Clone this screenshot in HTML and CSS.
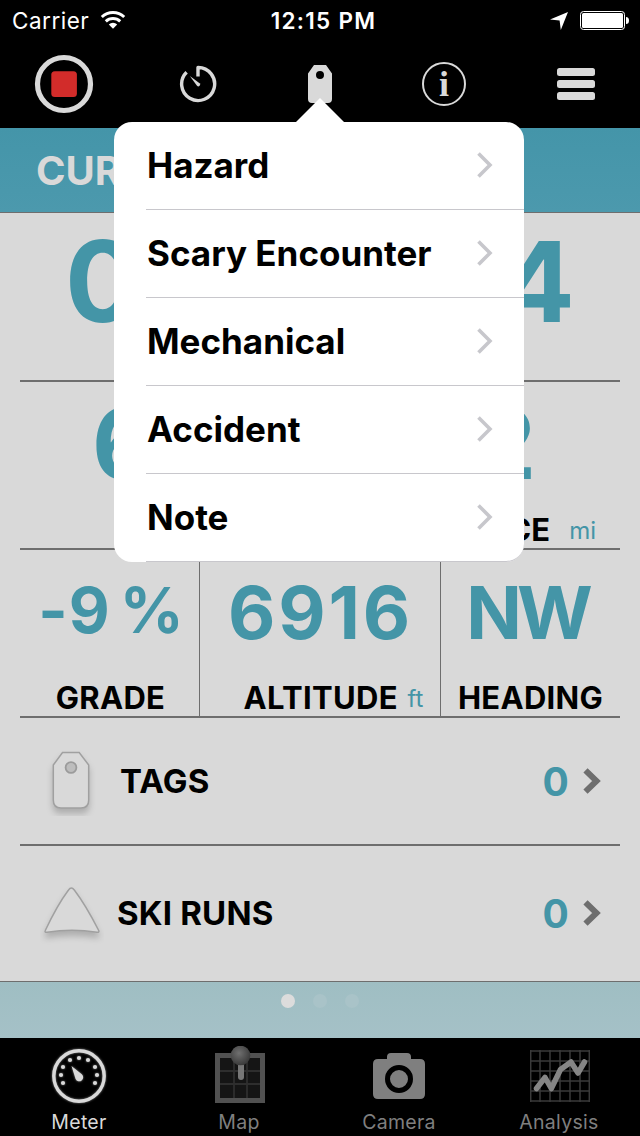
FILE: index.html
```
<!DOCTYPE html>
<html lang="en">
<head>
  <meta charset="UTF-8">
  <meta name="viewport" content="width=device-width, initial-scale=1.0">
  <title>Ski Meter</title>
  <link rel="stylesheet" href="styles.css">
</head>
<body>
  <div class="statusBar">
    <div class="statusLeft">
      <span class="carrier">Carrier</span>
      <svg width="26" height="20" viewBox="0 0 26 20">
        <path d="M1.8 7 A16.5 16.5 0 0 1 24.2 7" fill="none" stroke="#fff" stroke-width="3"/>
        <path d="M5.8 11.3 A10.6 10.6 0 0 1 20.2 11.3" fill="none" stroke="#fff" stroke-width="3"/>
        <path d="M8.8 14.4 A6 6 0 0 1 17.2 14.4 L13 18.8 Z" fill="#fff"/>
      </svg>
    </div>
    <div class="clock">12:15 PM</div>
    <div class="statusRight">
      <svg width="18" height="19" viewBox="0 0 18 19"><path d="M18 1 L10.8 19 L9.6 9.6 L0 8.6 Z" fill="#fff"/></svg>
      <svg width="50" height="20" viewBox="0 0 50 20">
        <rect x="0.5" y="0.5" width="44" height="18" rx="3" fill="none" stroke="#fff"/>
        <rect x="2" y="2" width="41" height="15" rx="1.5" fill="#fff"/>
        <path d="M46 6 Q49 6 49 9.5 Q49 13 46 13 Z" fill="#fff"/>
      </svg>
    </div>
  </div>

  <div class="toolbar">
    <svg width="60" height="60" viewBox="0 0 60 60">
      <circle cx="30" cy="30" r="26.5" fill="none" stroke="#d9d9d9" stroke-width="5.2"/>
      <rect x="17.3" y="17.3" width="25.6" height="25.6" rx="3.5" fill="#d22c2a"/>
    </svg>
    <svg width="40" height="40" viewBox="0 0 40 40">
      <path d="M20 12.5 V3.5 A16.5 16.5 0 1 1 8.6 8.2" fill="none" stroke="#d9d9d9" stroke-width="3.4" stroke-linejoin="round"/>
      <path d="M11.8 12 L21.6 19.2 A1.8 1.8 0 0 1 19 21.8 Z" fill="#d9d9d9"/>
    </svg>
    <svg width="24" height="38" viewBox="0 0 24 38">
      <path fill-rule="evenodd" d="M6 0 H18 L24 8.5 V34 Q24 38 20 38 H4 Q0 38 0 34 V8.5 Z M12 6 A4 4 0 1 0 12 14 A4 4 0 1 0 12 6 Z" fill="#d9d9d9"/>
    </svg>
    <div class="infoIcon">i</div>
    <svg width="38" height="32" viewBox="0 0 38 32">
      <rect width="38" height="8" rx="2.5" fill="#d9d9d9"/>
      <rect y="12" width="38" height="8" rx="2.5" fill="#d9d9d9"/>
      <rect y="24" width="38" height="8" rx="2.5" fill="#d9d9d9"/>
    </svg>
  </div>

  <div class="header">CUR</div>

  <div class="panel">
    <div class="metricRow topRow">
      <div class="cell toLeft"><div class="value">0</div></div>
      <div class="cell toRight"><div class="value">4</div></div>
    </div>
    <div class="metricRow midRow">
      <div class="cell toLeft"><div class="value">6</div></div>
      <div class="cell toRight">
        <div class="value">2</div>
        <div class="label">CE <span class="unit">mi</span></div>
      </div>
    </div>
    <div class="metricRow smallRow">
      <div class="cell">
        <div class="value grade">-9 %</div>
        <div class="label gradeLabel">GRADE</div>
      </div>
      <div class="cell">
        <div class="value altitude">6916</div>
        <div class="label altLabel">ALTITUDE <span class="unit">ft</span></div>
      </div>
      <div class="cell">
        <div class="value heading">NW</div>
        <div class="label">HEADING</div>
      </div>
    </div>
    <div class="listRow tagsRow">
      <svg class="listIcon" width="64" height="70" viewBox="0 0 64 70">
        <path class="lifted" d="M22.5 6.5 H39.2 L48.7 19 V54 Q48.7 62 41 62 H21 Q13.3 62 13.3 54 V19 Z"/>
        <circle cx="31" cy="21.5" r="5.4" fill="#bdbdbd" stroke="#9b9b9b" stroke-width="1.8"/>
      </svg>
      <span class="listName">TAGS</span>
      <span class="count">0</span>
      <svg width="20" height="28" viewBox="0 0 20 28"><path d="M2.5 3.3 L13.5 14 L2.5 24.7" fill="none" stroke="#6e6e6e" stroke-width="6"/></svg>
    </div>
    <div class="listRow runsRow">
      <svg class="listIcon" width="64" height="70" viewBox="0 0 64 70">
        <path class="lifted" d="M28.5 12 Q31.3 8 34.3 12 Q46 27.5 58.7 52.5 Q59.5 54.5 57 54.2 Q32 50.5 7 54.2 Q4.3 54.5 5.3 52.5 Q17 27.5 28.5 12 Z"/>
      </svg>
      <span class="listName">SKI RUNS</span>
      <span class="count">0</span>
      <svg width="20" height="28" viewBox="0 0 20 28"><path d="M2.5 3.3 L13.5 14 L2.5 24.7" fill="none" stroke="#6e6e6e" stroke-width="6"/></svg>
    </div>
  </div>

  <div class="pager">
    <span class="dot active"></span>
    <span class="dot"></span>
    <span class="dot"></span>
  </div>

  <div class="tabBar">
    <div class="tab selected">
      <svg class="glow" width="60" height="60" viewBox="0 0 60 60">
        <circle cx="29" cy="30" r="25.2" fill="none" stroke="#d9d9d9" stroke-width="3.4"/>
        <g fill="#d9d9d9">
          <circle cx="29" cy="12" r="2.1"/>
          <circle cx="20" cy="14" r="2.1"/>
          <circle cx="38" cy="14" r="2.1"/>
          <circle cx="13" cy="21" r="2.1"/>
          <circle cx="45" cy="21" r="2.1"/>
          <circle cx="11" cy="29" r="2.1"/>
          <circle cx="47" cy="29" r="2.1"/>
          <circle cx="13" cy="37" r="2.1"/>
          <circle cx="45" cy="37" r="2.1"/>
          <path d="M21.5 20 L31.8 28.2 A4 4 0 1 1 25.6 33 Z"/>
        </g>
      </svg>
      <span>Meter</span>
    </div>
    <div class="tab">
      <svg width="60" height="60" viewBox="0 0 60 60">
        <defs>
          <radialGradient id="ball" cx="0.42" cy="0.38" r="0.6">
            <stop offset="0" stop-color="#707070"/>
            <stop offset="1" stop-color="#3c3c3c"/>
          </radialGradient>
        </defs>
        <rect x="7.5" y="9.5" width="45" height="45" fill="#151515" stroke="#515151" stroke-width="5"/>
        <path d="M24 12 V52 M37 12 V52 M10 25 H50 M10 38 H50" stroke="#2e2e2e" stroke-width="1.8"/>
        <rect x="28" y="16" width="6" height="18" rx="3" fill="#777"/>
        <circle cx="30.5" cy="9.5" r="9.8" fill="url(#ball)"/>
      </svg>
      <span>Map</span>
    </div>
    <div class="tab">
      <svg width="60" height="60" viewBox="0 0 60 60">
        <path d="M3 18 Q3 13 8 13 H17 V11 Q17 7 21 7 H37 Q41 7 41 11 V13 H50 Q55 13 55 18 V48 Q55 53 50 53 H8 Q3 53 3 48 Z" fill="#7f7f7f"/>
        <circle cx="29" cy="33" r="11.5" fill="none" stroke="#000" stroke-width="5"/>
      </svg>
      <span>Camera</span>
    </div>
    <div class="tab">
      <svg width="60" height="60" viewBox="0 0 60 60">
        <path d="M0.7 4 V56 M10 4 V56 M20 4 V56 M30 4 V56 M40 4 V56 M50 4 V56 M59.3 4 V56 M0 5 H60 M0 15 H60 M0 25 H60 M0 35 H60 M0 45 H60 M0 55 H60" stroke="#3a3a3a" stroke-width="1.5"/>
        <path class="chartLine" d="M6.5 42.5 L15 31.5 L21.3 42.5 L30.5 23.5 L41 16 L48 27 L54.5 16"/>
      </svg>
      <span>Analysis</span>
    </div>
  </div>

  <div class="popover">
    <div class="option"><span>Hazard</span><svg width="16" height="26" viewBox="0 0 16 26"><path d="M1.5 1.4 L13 13 L1.5 24.6"/></svg></div>
    <div class="option"><span>Scary Encounter</span><svg width="16" height="26" viewBox="0 0 16 26"><path d="M1.5 1.4 L13 13 L1.5 24.6"/></svg></div>
    <div class="option"><span>Mechanical</span><svg width="16" height="26" viewBox="0 0 16 26"><path d="M1.5 1.4 L13 13 L1.5 24.6"/></svg></div>
    <div class="option"><span>Accident</span><svg width="16" height="26" viewBox="0 0 16 26"><path d="M1.5 1.4 L13 13 L1.5 24.6"/></svg></div>
    <div class="option"><span>Note</span><svg width="16" height="26" viewBox="0 0 16 26"><path d="M1.5 1.4 L13 13 L1.5 24.6"/></svg></div>
  </div>
</body>
</html>
```
FILE: styles.css
```
* {
  box-sizing: border-box;
}
body {
  font-family: Inter, "Liberation Sans", sans-serif;
  background: #000;
  margin: 0;
  width: 640px;
  height: 1136px;
  overflow: hidden;
  position: relative;
}
svg {
  display: block;
  flex: none;
}

/* status bar */
.statusBar {
  display: grid;
  grid-template-columns: 1fr auto 1fr;
  height: 40px;
  padding: 0 10px 0 12px;
  color: #fff;
  font-size: 22.5px;
  line-height: 41px;
}
.statusLeft {
  display: flex;
  gap: 11px;
}
.statusLeft svg {
  margin-top: 10px;
}
.carrier {
  letter-spacing: 0.5px;
}
.clock {
  margin-left: 5px;
  font-weight: 600;
  letter-spacing: 1.3px;
}
.statusRight {
  display: flex;
  justify-content: flex-end;
  gap: 12px;
}
.statusRight svg {
  margin-top: 11px;
}

/* toolbar */
.toolbar {
  display: grid;
  grid-template-columns: 128px 140px 104px 144px 120px;
  place-items: center;
  height: 88px;
}
.infoIcon {
  width: 44px;
  height: 44px;
  border: 2px solid #d9d9d9;
  border-radius: 50%;
  color: #d9d9d9;
  font-family: "Liberation Serif", serif;
  font-size: 36px;
  font-weight: 700;
  line-height: 40px;
  text-align: center;
}

.header {
  height: 85px;
  padding-left: 36px;
  border-bottom: 1px solid #6e6e6e;
  background: linear-gradient(#4495a9, #4c99ad);
  color: #d9d9d9;
  font-size: 40px;
  font-weight: 700;
  line-height: 86px;
}

/* meter panel */
.panel {
  height: 769px;
  padding: 0 20px;
  background: #d9d9d9;
  border-bottom: 1px solid #6e6e6e;
}
.metricRow {
  display: grid;
  grid-template-columns: 1fr 1fr;
  height: 168px;
  border-bottom: 2px solid #6e6e6e;
}
.cell {
  text-align: center;
}
.toLeft {
  text-align: left;
}
.toRight {
  text-align: right;
}
.value {
  height: 130px;
  color: #4495a7;
  font-weight: 700;
  line-height: 125px;
  white-space: nowrap;
}
.label {
  height: 36px;
  font-size: 31px;
  font-weight: 700;
  line-height: 36px;
  letter-spacing: 0.3px;
  white-space: nowrap;
}
.unit {
  color: #4495a7;
  font-size: 24px;
  font-weight: 400;
  line-height: 1;
  letter-spacing: 0;
  vertical-align: 2px;
}
.topRow {
  height: 169px;
}
.topRow .value {
  font-size: 112px;
  line-height: 136px;
}
.topRow .toLeft {
  padding-left: 45px;
}
.topRow .toRight {
  padding-right: 45px;
}
.midRow .value {
  font-size: 97px;
  line-height: 124px;
}
.midRow .toLeft {
  padding-left: 72px;
}
.midRow .toRight .value {
  padding-right: 84px;
}
.midRow .label {
  padding-right: 24px;
}
.midRow .unit {
  margin-left: 11px;
}
.smallRow {
  grid-template-columns: 180px 241px 179px;
}
.smallRow .cell + .cell {
  border-left: 1px solid #6e6e6e;
}
.smallRow .cell {
  height: 166px;
  margin-left: -1px;
}
.smallRow .value {
  font-size: 73px;
}
.smallRow .grade {
  padding-left: 4px;
  font-size: 63px;
  line-height: 120px;
  letter-spacing: 1px;
  word-spacing: -7px;
}
.smallRow .altitude {
  letter-spacing: 2.8px;
}
.smallRow .heading {
  font-size: 73px;
  letter-spacing: -5px;
  padding-right: 7px;
}
.gradeLabel {
  padding-left: 2px;
}
.altLabel {
  padding-left: 26px;
}
.altLabel .unit {
  margin-left: 2px;
}

/* list rows */
.listRow {
  display: flex;
  align-items: center;
  height: 128px;
  padding: 0 17px 0 20px;
  border-bottom: 2px solid #6e6e6e;
  font-size: 33px;
  font-weight: 700;
  letter-spacing: 0.2px;
}
.runsRow {
  height: 134px;
  border-bottom: none;
}
.listIcon {
  width: 64px;
  margin-right: 16px;
}
.runsRow .listIcon {
  margin-right: 13px;
}
.lifted {
  fill: #d9d9d9;
  stroke: #a0a0a0;
  stroke-width: 1.5;
  filter: drop-shadow(0 5px 3px rgba(0,0,0,0.2));
}
.listName {
  flex: 1;
}
.count {
  margin-right: 14px;
  color: #4495a7;
  font-size: 39px;
}

.pager {
  display: flex;
  justify-content: center;
  gap: 18px;
  height: 56px;
  padding-top: 12px;
  background: linear-gradient(#9fbec3, #a5c1c7);
}
.dot {
  width: 14px;
  height: 14px;
  border-radius: 50%;
  background: #a9c3c8;
}
.dot.active {
  background: #dcdcdc;
}

/* tabs */
.tabBar {
  display: grid;
  grid-template-columns: repeat(4, 1fr);
  height: 98px;
  padding-top: 8px;
}
.tab {
  display: flex;
  flex-direction: column;
  align-items: center;
  gap: 2px;
  color: #7f7f7f;
  font-size: 19.5px;
  line-height: 28px;
  letter-spacing: 0.3px;
}
.tab span {
  margin-left: -2px;
}
.selected {
  color: #d9d9d9;
}
.glow {
  filter: drop-shadow(0 0 1px rgba(255,255,255,0.5));
}
.chartLine {
  fill: none;
  stroke: #858585;
  stroke-width: 5.5;
  stroke-linecap: round;
  stroke-linejoin: round;
}

/* tag menu, opens under the tag button */
.popover {
  position: absolute;
  top: 122px;
  left: 114px;
  width: 410px;
  height: 440px;
  padding-left: 32px;
  border-radius: 18px;
  background: #fff;
}
.popover::before {
  content: "";
  position: absolute;
  top: -24px;
  left: 182px;
  border: 24px solid transparent;
  border-top: none;
  border-bottom-color: #fff;
}
.option {
  display: flex;
  align-items: center;
  justify-content: space-between;
  height: 88px;
  padding: 0 31px 2px 1px;
  border-bottom: 1px solid #c8c7cc;
  font-size: 35px;
  font-weight: 700;
}
.option:last-child {
  border-bottom-right-radius: 18px;
}
.option path {
  fill: none;
  stroke: #c7c7cc;
  stroke-width: 3.6;
}
```
